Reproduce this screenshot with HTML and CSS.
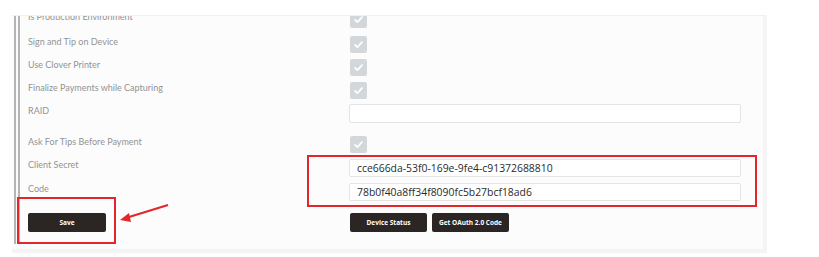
FILE: index.html
```html
<!DOCTYPE html>
<html lang="en">

<head>
  <meta charset="UTF-8">
  <title>Clover Settings</title>
  <link rel="stylesheet" href="styles.css">
</head>

<body>
  <div class="panel">
    <div class="inner">
      <div class="row row-check first">
        <label class="lbl">Is Production Environment</label>
        <span class="check"><svg viewBox="0 0 17 17"><path d="M5 8.8 L7.4 11.2 L12 6.2" /></svg></span>
      </div>
      <div class="row row-check">
        <label class="lbl">Sign and Tip on Device</label>
        <span class="check"><svg viewBox="0 0 17 17"><path d="M5 8.8 L7.4 11.2 L12 6.2" /></svg></span>
      </div>
      <div class="row row-check">
        <label class="lbl">Use Clover Printer</label>
        <span class="check"><svg viewBox="0 0 17 17"><path d="M5 8.8 L7.4 11.2 L12 6.2" /></svg></span>
      </div>
      <div class="row row-check last-check">
        <label class="lbl">Finalize Payments while Capturing</label>
        <span class="check"><svg viewBox="0 0 17 17"><path d="M5 8.8 L7.4 11.2 L12 6.2" /></svg></span>
      </div>
      <div class="row row-raid">
        <label class="lbl raid-lbl">RAID</label>
        <input type="text" class="field" value="">
      </div>
      <div class="row row-check">
        <label class="lbl">Ask For Tips Before Payment</label>
        <span class="check"><svg viewBox="0 0 17 17"><path d="M5 8.8 L7.4 11.2 L12 6.2" /></svg></span>
      </div>
      <div class="row row-secret">
        <label class="lbl">Client Secret</label>
        <input type="text" class="field" value="cce666da-53f0-169e-9fe4-c91372688810">
      </div>
      <div class="row row-code">
        <label class="lbl">Code</label>
        <input type="text" class="field" value="78b0f40a8ff34f8090fc5b27bcf18ad6">
      </div>
      <div class="row row-buttons">
        <div class="lbl">
          <button class="btn">Save</button>
        </div>
        <div class="btn-group">
          <button class="btn">Device Status</button>
          <button class="btn">Get OAuth 2.0 Code</button>
        </div>
      </div>
    </div>

    <!-- annotations drawn over the form -->
    <div class="mark mark-fields"></div>
    <div class="mark mark-save"></div>
    <svg class="arrow" viewBox="0 0 50 22">
      <line x1="48" y1="2" x2="9" y2="14" />
      <path d="M0 17 L9 10 L11 19 Z" />
    </svg>
  </div>
</body>

</html>
```

FILE: styles.css
```css
body {
  margin: 0;
  background: #ffffff;
  font-family: "Open Sans", Arial, sans-serif;
}

.panel {
  position: relative;
  box-sizing: border-box;
  width: 755px;
  height: 238px;
  margin: 15px 0 0 12px;
  padding-left: 2px;
  background: #fcfcfc;
  border-top: 1px solid #f0f0f0;
  border-right: 4px solid #f4f4f4;
  border-bottom: 4px solid #f4f4f4;
  overflow: hidden;
}

.inner {
  height: 100%;
  padding-left: 8px;
  border-left: 6px double #b4b4b4;
}

.row {
  display: flex;
  align-items: flex-start;
}

.lbl {
  width: 321px;
  flex-shrink: 0;
  font-family: Lato, "Open Sans", sans-serif;
  font-size: 9px;
  line-height: 12px;
  color: #939393;
}

.row-check {
  height: 23px;
}

/* first row is partly scrolled out of view */
.first {
  margin-top: -5px;
  height: 25px;
}

.last-check {
  height: 22px;
}

.row-raid {
  height: 32px;
}

.raid-lbl {
  padding-top: 1px;
}

.row-secret {
  height: 24px;
}

.row-code {
  height: 30px;
}

.check {
  display: block;
  width: 17px;
  height: 17px;
  margin-left: 1px;
  background: #d4d7da;
  border-radius: 2px;
}

.check svg {
  display: block;
  width: 17px;
  height: 17px;
}

.check path {
  fill: none;
  stroke: #ffffff;
  stroke-width: 1.7;
  stroke-linecap: round;
  stroke-linejoin: round;
}

.field {
  box-sizing: border-box;
  width: 392px;
  height: 19px;
  margin: 0;
  padding: 0 7px;
  background: #ffffff;
  border: 1px solid #e4e4e4;
  border-radius: 2px;
  font-family: "Open Sans", Arial, sans-serif;
  font-size: 10.4px;
  color: #2a2a2a;
}

.row-secret .field,
.row-code .field {
  height: 18px;
}

.btn-group {
  display: flex;
  gap: 5px;
  margin-left: 1px;
}

.btn {
  display: block;
  width: 77px;
  height: 19px;
  padding: 0;
  background: #2b2624;
  color: #ffffff;
  border: none;
  border-radius: 2px;
  font-family: "Open Sans", Arial, sans-serif;
  font-size: 6.5px;
  font-weight: bold;
}

.row-buttons .lbl .btn {
  width: 78px;
}

/* red annotation boxes */
.mark {
  position: absolute;
  box-sizing: border-box;
  border: 2px solid #e3262b;
}

.mark-fields {
  left: 295px;
  top: 139px;
  width: 450px;
  height: 52px;
}

.mark-save {
  left: 5px;
  top: 181px;
  width: 99px;
  height: 47px;
}

.arrow {
  position: absolute;
  left: 108px;
  top: 187px;
  width: 50px;
  height: 22px;
}

.arrow line {
  stroke: #e3262b;
  stroke-width: 2;
}

.arrow path {
  fill: #e3262b;
}
```
